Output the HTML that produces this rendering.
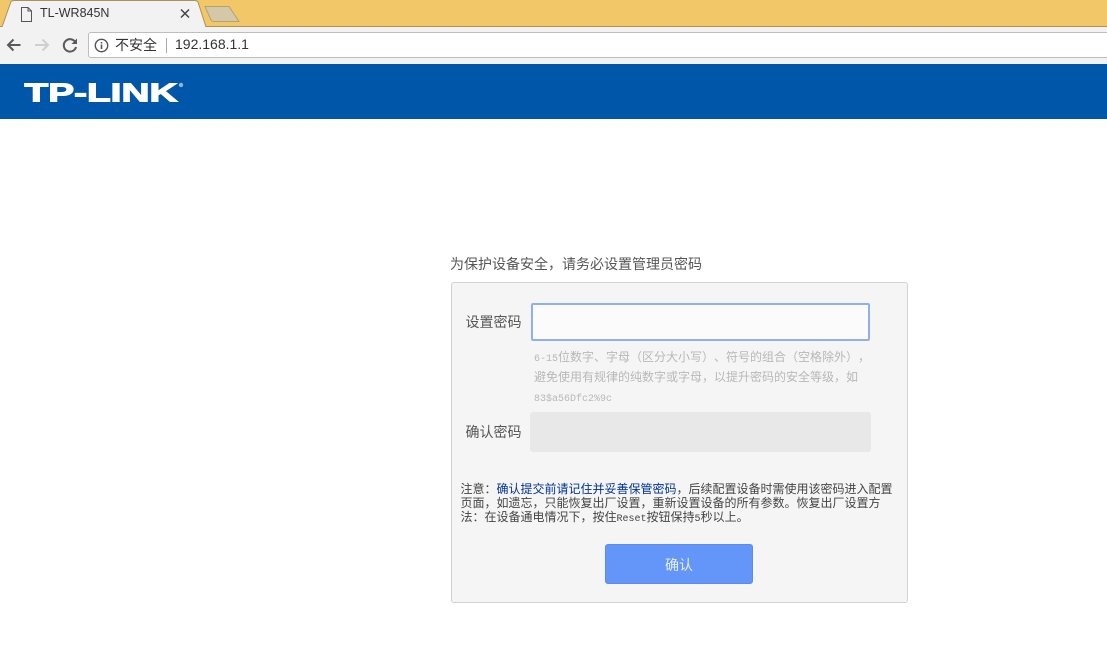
<!DOCTYPE html>
<html lang="zh">
<head>
<meta charset="utf-8">
<title>TL-WR845N</title>
<style>
html,body{margin:0;padding:0;background:#fff;}
body{width:1107px;height:662px;position:relative;overflow:hidden;font-family:"Liberation Sans","Noto Sans CJK SC",sans-serif;color:#333;text-spacing-trim:space-all;}
.a{position:absolute;white-space:nowrap;}
.cn{font-family:"WenQuanYi Zen Hei","Noto Sans CJK SC",sans-serif;}
.m{font-family:"Liberation Mono",monospace;font-size:10px;line-height:1;}
</style>
</head>
<body>
<!-- browser chrome -->
<div class="a" style="left:0;top:0;width:1107px;height:26px;background:#f2c768;"></div>
<div class="a" style="left:0;top:26px;width:1107px;height:1px;background:#a8935a;"></div>
<div class="a" style="left:0;top:27px;width:1107px;height:37px;background:#f2f2f2;"></div>
<svg class="a" style="left:0;top:0" width="260" height="30" viewBox="0 0 260 30">
  <path d="M2 27L11 1.500Q12 0.500 14 0.500H195Q197 0.500 198 2L206 27" fill="#f2f2f2" stroke="#a8935a" stroke-width="1"/>
  <path d="M205 6.500H229L239 21.500H214Q212 21.500 211 20Z" fill="#d4c8a8" stroke="#b3a276" stroke-width="1"/>
  <path d="M21.500 7.500H28L31.500 11V21.500H21.500Z M28 7.500V11H31.500" fill="none" stroke="#555" stroke-width="1"/>
  <path d="M181 9.500L189 17.500M189 9.500L181 17.500" stroke="#444" stroke-width="1.500" fill="none"/>
</svg>
<div class="a" style="left:40px;top:5px;font-size:12.500px;line-height:16px;color:#333;">TL-WR845N</div>
<svg class="a" style="left:0;top:30px" width="88" height="30" viewBox="0 0 88 30">
  <path d="M20.500 15H8M13.500 9.500L8 15L13.500 20.500" fill="none" stroke="#5a5a5a" stroke-width="2"/>
  <path d="M35 15H48M42.500 9.500L48 15L42.500 20.500" fill="none" stroke="#cfcfcf" stroke-width="2"/>
  <path d="M75.500 12.500A6.200 6.200 0 1 0 76 17" fill="none" stroke="#5a5a5a" stroke-width="2"/>
  <path d="M77 8.500V14H71.500Z" fill="#5a5a5a"/>
</svg>
<div class="a" style="left:88px;top:32px;width:1025px;height:26px;background:#fff;border:1px solid #bdbdbd;border-radius:3px;box-sizing:border-box;"></div>
<svg class="a" style="left:94px;top:38px" width="15" height="15" viewBox="0 0 15 15">
  <circle cx="7.500" cy="7.500" r="6.200" fill="none" stroke="#555" stroke-width="1.400"/>
  <path d="M7.500 6.500V11" stroke="#555" stroke-width="1.600"/>
  <path d="M7.500 4V5.500" stroke="#555" stroke-width="1.600"/>
</svg>
<div class="a" style="left:115px;top:37px;font-size:14px;line-height:16px;color:#333;font-family:'Noto Sans CJK SC',sans-serif;">不安全</div>
<div class="a" style="left:166px;top:38px;width:1px;height:15px;background:#aaa;"></div>
<div class="a" style="left:175px;top:36px;font-size:14px;line-height:17px;color:#333;">192.168.1.1</div>

<!-- header -->
<div class="a" style="left:0;top:64px;width:1107px;height:55px;background:#0056a8;"></div>
<svg class="a" style="left:0;top:64px" width="200" height="55" viewBox="0 0 200 55">
  <text x="24.500" y="37.500" font-family="Liberation Sans" font-weight="700" font-size="26" fill="#fff" stroke="#fff" stroke-width="1.100" textLength="153" lengthAdjust="spacingAndGlyphs">TP-LINK</text>
  <circle cx="181" cy="21" r="2.200" fill="#8fb4d8"/>
</svg>

<!-- form -->
<div class="a cn" style="left:450px;top:256px;font-size:14px;line-height:16px;color:#555;">为保护设备安全，请务必设置管理员密码</div>
<div class="a" style="left:451px;top:282px;width:457px;height:321px;box-sizing:border-box;background:#f5f5f5;border:1px solid #d2d2d2;border-radius:3px;"></div>
<div class="a cn" style="left:465.500px;top:314px;font-size:14px;line-height:16px;color:#555;">设置密码</div>
<div class="a" style="left:531px;top:303px;width:339px;height:38px;box-sizing:border-box;background:#fbfbfb;border:2px solid #8fb0ee;border-radius:2px;"></div>
<div class="a cn" style="left:534px;top:347px;font-size:12px;line-height:20px;color:#b8b8b8;"><span class="m">6-15</span>位数字、字母（区分大小写）、符号的组合（空格除外），<br>避免使用有规律的纯数字或字母，以提升密码的安全等级，如<br><span class="m">83$a56Dfc2%9c</span></div>
<div class="a cn" style="left:465.500px;top:424px;font-size:14px;line-height:16px;color:#555;">确认密码</div>
<div class="a" style="left:530px;top:412px;width:341px;height:40px;background:#e8e8e8;border-radius:3px;"></div>
<div class="a cn" style="left:460.500px;top:482px;font-size:12px;line-height:14px;color:#444;">注意：<span style="color:#003399;">确认提交前请记住并妥善保管密码</span>，后续配置设备时需使用该密码进入配置<br>页面，如遗忘，只能恢复出厂设置，重新设置设备的所有参数。恢复出厂设置方<br>法：在设备通电情况下，按住<span class="m">Reset</span>按钮保持<span class="m">5</span>秒以上。</div>
<div class="a cn" style="left:605px;top:544px;width:148px;height:40px;box-sizing:border-box;background:#6495f9;border:1px solid #5a8bee;border-radius:3px;color:#e8f0ff;font-size:14px;line-height:40px;text-align:center;">确认</div>
</body>
</html>
